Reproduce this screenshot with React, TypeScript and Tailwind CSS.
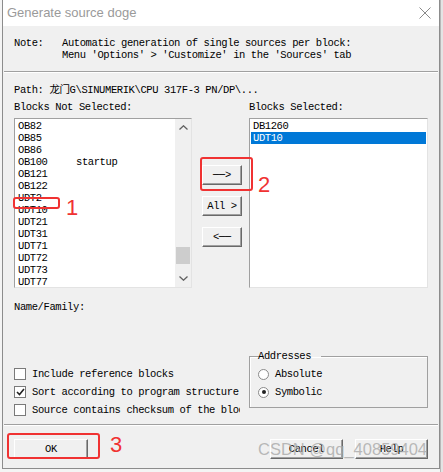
const mono = "font-['Liberation_Mono','Noto_Sans_CJK_SC',monospace] text-[10.5px] tracking-[-0.4px] text-black";
const boxDash = "font-['DejaVu_Sans_Mono',monospace] tracking-normal text-[10px]";

const notSelected: { name: string; note?: string }[] = [
  { name: "OB82" },
  { name: "OB85" },
  { name: "OB86" },
  { name: "OB100", note: "startup" },
  { name: "OB121" },
  { name: "OB122" },
  { name: "UDT2" },
  { name: "UDT10" },
  { name: "UDT21" },
  { name: "UDT31" },
  { name: "UDT71" },
  { name: "UDT72" },
  { name: "UDT73" },
  { name: "UDT77" },
];

function Button({ children, width }: { children: React.ReactNode; width: string }) {
  return (
    <div
      className={`${width} h-[20px] flex items-center justify-center bg-[#f0f0f0] border border-t-white border-l-white border-r-[#696969] border-b-[#696969] shadow-[inset_-1px_-1px_0_#a0a0a0] leading-none`}
    >
      {children}
    </div>
  );
}

function Check({ checked, label }: { checked?: boolean; label: string }) {
  return (
    <div className="h-[18px] flex items-center gap-[6px] whitespace-nowrap">
      <div className="w-[12px] h-[12px] shrink-0 bg-white border border-[#7a7a7a] flex items-center justify-center">
        {checked && (
          <svg width="9" height="8" viewBox="0 0 9 8">
            <path d="M1 4 L3.5 6.5 L8 1" fill="none" stroke="#222" strokeWidth="1.6" />
          </svg>
        )}
      </div>
      <span>{label}</span>
    </div>
  );
}

function Radio({ checked, label }: { checked?: boolean; label: string }) {
  return (
    <div className="h-[18px] flex items-center gap-[6px]">
      <div className="w-[11px] h-[11px] rounded-full bg-white border border-[#8a8a8a] flex items-center justify-center">
        {checked && <div className="w-[4px] h-[4px] rounded-full bg-[#222]" />}
      </div>
      <span>{label}</span>
    </div>
  );
}

function Separator() {
  return <div className="h-[2px] border-t border-[#a0a0a0] border-b border-b-white mx-[1px]" />;
}

export default function App() {
  return (
    <div className="relative w-[443px] h-[472px] overflow-hidden bg-[#f4f4f4] flex pl-[2px]">
      <div className="w-[438px] h-[469px] flex flex-col bg-[#f0f0f0] border-l border-r border-b border-[#8c8c8c]">
        {/* title bar */}
        <div className="h-[26px] shrink-0 bg-white flex items-center justify-between pl-[4px] pr-[8px]">
          <span className="font-['Liberation_Sans',sans-serif] text-[13px] text-[#9a9a9a]">Generate source doge</span>
          <svg width="12" height="12" viewBox="0 0 12 12">
            <path d="M0.5 0.5 L11.5 11.5 M11.5 0.5 L0.5 11.5" stroke="#8a8a8a" strokeWidth="1" />
          </svg>
        </div>

        <div className={`${mono} flex flex-col`}>
          {/* note */}
          <div className="pt-[11px] pl-[11px] flex leading-[12px]">
            <span className="w-[48px]">Note:</span>
            <div>
              <div>Automatic generation of single sources per block:</div>
              <div>Menu 'Options' &gt; 'Customize' in the 'Sources' tab</div>
            </div>
          </div>
          <div className="mt-[10px]">
            <Separator />
          </div>

          <div className="px-[11px] leading-[12px]">
            <div className="mt-[11px] whitespace-nowrap">Path: 龙门G\SINUMERIK\CPU 317F-3 PN/DP\...</div>

            <div className="mt-[5px] flex">
              <span className="w-[235px]">Blocks Not Selected:</span>
              <span>Blocks Selected:</span>
            </div>

            {/* lists */}
            <div className="mt-[5px] flex h-[170px]">
              <div className="w-[178px] h-full flex bg-white border border-t-[#a0a0a0] border-l-[#a0a0a0] border-r-[#e3e3e3] border-b-[#e3e3e3] overflow-hidden">
                <div className="flex-1 pl-[3px] pt-[1px]">
                  {notSelected.map((b) => (
                    <div key={b.name} className="h-[12px] flex">
                      <span className="w-[58px]">{b.name}</span>
                      {b.note && <span>{b.note}</span>}
                    </div>
                  ))}
                </div>
                <div className="w-[16px] bg-[#f0f0f0] flex flex-col">
                  <div className="h-[17px] flex items-center justify-center">
                    <svg width="9" height="5" viewBox="0 0 9 5">
                      <path d="M0.5 4.5 L4.5 0.8 L8.5 4.5" fill="none" stroke="#606060" strokeWidth="1.3" />
                    </svg>
                  </div>
                  <div className="flex-1 flex flex-col justify-end pb-[6px]">
                    <div className="h-[17px] mx-[1px] bg-[#cdcdcd]" />
                  </div>
                  <div className="h-[17px] flex items-center justify-center">
                    <svg width="9" height="5" viewBox="0 0 9 5">
                      <path d="M0.5 0.5 L4.5 4.2 L8.5 0.5" fill="none" stroke="#606060" strokeWidth="1.3" />
                    </svg>
                  </div>
                </div>
              </div>

              <div className="w-[57px] pl-[10px] pt-[47px] flex flex-col gap-[11px]">
                <Button width="w-[40px]">
                  <span className={boxDash}>──</span>&gt;
                </Button>
                <Button width="w-[40px]">All &gt;</Button>
                <Button width="w-[40px]">
                  &lt;<span className={boxDash}>──</span>
                </Button>
              </div>

              <div className="w-[179px] h-full bg-white border border-t-[#a0a0a0] border-l-[#a0a0a0] border-r-[#e3e3e3] border-b-[#e3e3e3] pt-[1px] pl-[1px] pr-[1px]">
                <div className="h-[12px] pl-[2px]">DB1260</div>
                <div className="h-[12px] pl-[2px] bg-[#0078d7] text-white">UDT10</div>
              </div>
            </div>

            <div className="mt-[13px]">Name/Family:</div>

            {/* options */}
            <div className="mt-[37px] flex">
              <div className="w-[226px] pt-[15px] overflow-hidden">
                <Check label="Include reference blocks" />
                <Check checked label="Sort according to program structure" />
                <Check label="Source contains checksum of the blocks" />
              </div>
              <fieldset className="ml-[9px] w-[179px] h-[58px] border border-[#a0a0a0] shadow-[inset_1px_1px_0_white] pl-[8px]">
                <legend className="ml-[6px] px-[2px] -translate-x-[8px]">Addresses</legend>
                <div className="mt-[3px]">
                  <Radio label="Absolute" />
                  <Radio checked label="Symbolic" />
                </div>
              </fieldset>
            </div>
          </div>

          <div className="mt-[5px]">
            <Separator />
          </div>

          <div className="mt-[13px] px-[11px] flex">
            <Button width="w-[74px]">OK</Button>
            <div className="ml-auto flex gap-[12px]">
              <Button width="w-[73px]">Cancel</Button>
              <Button width="w-[73px]">Help</Button>
            </div>
          </div>
        </div>
      </div>
      <div className="w-[3px] h-full bg-[#e4e4e4] border-l border-[#b8b8b8]" />

      {/* annotations */}
      <div className="absolute left-[13px] top-[197px] w-[47px] h-[12px] border-2 border-[#f03232] rounded-[3px]" />
      <div className="absolute left-[66px] top-[196px] font-['Liberation_Sans',sans-serif] text-[22px] leading-[24px] text-[#f03232]">1</div>
      <div className="absolute left-[200px] top-[157px] w-[53px] h-[34px] border-2 border-[#f03232] rounded-[3px]" />
      <div className="absolute left-[258px] top-[173px] font-['Liberation_Sans',sans-serif] text-[22px] leading-[24px] text-[#f03232]">2</div>
      <div className="absolute left-[7px] top-[433px] w-[93px] h-[26px] border-2 border-[#f03232] rounded-[3px]" />
      <div className="absolute left-[110px] top-[433px] font-['Liberation_Sans',sans-serif] text-[22px] leading-[24px] text-[#f03232]">3</div>
      <div className="absolute left-[258px] top-[439px] font-['Liberation_Sans',sans-serif] text-[16.5px] leading-[20px] text-[#a8a8a8]/80">
        CSDN @qq_40859404
      </div>
    </div>
  );
}
